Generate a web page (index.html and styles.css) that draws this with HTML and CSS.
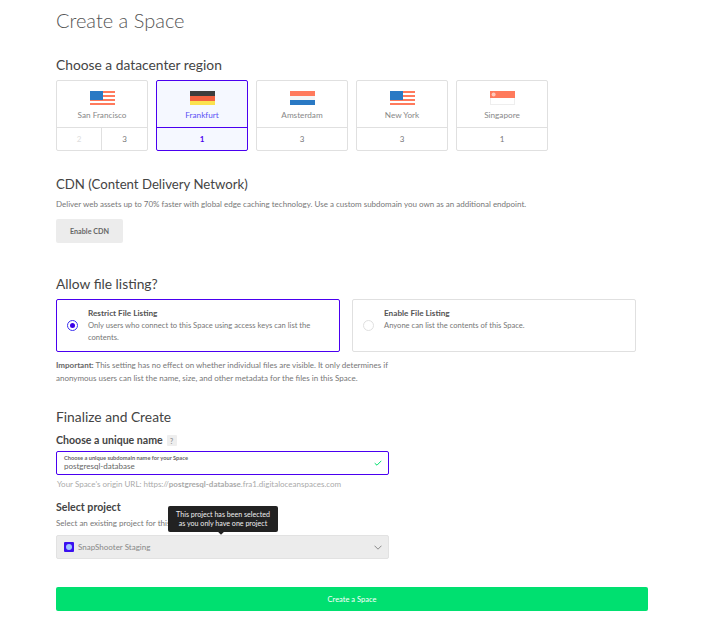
FILE: index.html
```html
<!DOCTYPE html>
<html lang="en">
<head>
<meta charset="utf-8">
<title>Create a Space</title>
<link rel="stylesheet" href="styles.css">
</head>
<body>
<main class="page">
  <h1 class="title">Create a Space</h1>

  <section class="region-section">
    <h2 class="heading">Choose a datacenter region</h2>
    <div class="regions">
      <div class="region">
        <div class="region-top">
          <svg class="flag" viewBox="0 0 25 14"><rect width="25" height="14" fill="#ff7a5c"/><rect y="2" width="25" height="2" fill="#fff"/><rect y="6" width="25" height="2" fill="#fff"/><rect y="10" width="25" height="2" fill="#fff"/><rect width="13" height="9" fill="#2a79c4"/></svg>
          <span class="region-name">San Francisco</span>
        </div>
        <div class="region-nums"><span class="num num-off">2</span><span class="num">3</span></div>
      </div>
      <div class="region region-on">
        <div class="region-top">
          <svg class="flag" viewBox="0 0 25 14"><rect width="25" height="5" fill="#3d3d3d"/><rect y="5" width="25" height="5" fill="#f2603f"/><rect y="10" width="25" height="4" fill="#fbe24f"/></svg>
          <span class="region-name">Frankfurt</span>
        </div>
        <div class="region-nums"><span class="num">1</span></div>
      </div>
      <div class="region">
        <div class="region-top">
          <svg class="flag" viewBox="0 0 25 14"><rect width="25" height="5" fill="#ff7a5c"/><rect y="5" width="25" height="4" fill="#f5f5f5"/><rect y="9" width="25" height="5" fill="#2a79c4"/></svg>
          <span class="region-name">Amsterdam</span>
        </div>
        <div class="region-nums"><span class="num">3</span></div>
      </div>
      <div class="region">
        <div class="region-top">
          <svg class="flag" viewBox="0 0 25 14"><rect width="25" height="14" fill="#ff7a5c"/><rect y="2" width="25" height="2" fill="#fff"/><rect y="6" width="25" height="2" fill="#fff"/><rect y="10" width="25" height="2" fill="#fff"/><rect width="13" height="9" fill="#2a79c4"/></svg>
          <span class="region-name">New York</span>
        </div>
        <div class="region-nums"><span class="num">3</span></div>
      </div>
      <div class="region">
        <div class="region-top">
          <svg class="flag" viewBox="0 0 25 14"><rect width="25" height="14" fill="#f0f0f0"/><rect x="0.5" y="0.5" width="24" height="13" fill="#fff" stroke="#eee"/><rect width="25" height="7" fill="#ff7a5c"/><circle cx="3.6" cy="3.4" r="2" fill="#ffc9bb"/></svg>
          <span class="region-name">Singapore</span>
        </div>
        <div class="region-nums"><span class="num">1</span></div>
      </div>
    </div>
  </section>

  <section class="cdn-section">
    <h2 class="heading heading-cdn">CDN (Content Delivery Network)</h2>
    <p class="copy">Deliver web assets up to 70% faster with global edge caching technology. Use a custom subdomain you own as an additional endpoint.</p>
    <button class="btn-grey" type="button">Enable CDN</button>
  </section>

  <section class="listing-section">
    <h2 class="heading">Allow file listing?</h2>
    <div class="options">
      <div class="option option-on">
        <span class="radio radio-on"></span>
        <div class="option-text">
          <strong class="option-title">Restrict File Listing</strong>
          <p class="copy">Only users who connect to this Space using access keys can list the contents.</p>
        </div>
      </div>
      <div class="option">
        <span class="radio"></span>
        <div class="option-text">
          <strong class="option-title">Enable File Listing</strong>
          <p class="copy">Anyone can list the contents of this Space.</p>
        </div>
      </div>
    </div>
    <p class="copy note"><b>Important:</b> This setting has no effect on whether individual files are visible. It only determines if anonymous users can list the name, size, and other metadata for the files in this Space.</p>
  </section>

  <section class="final-section">
    <h2 class="heading">Finalize and Create</h2>
    <div class="label-row"><h3 class="label">Choose a unique name</h3><span class="help">?</span></div>
    <div class="input">
      <span class="input-label">Choose a unique subdomain name for your Space</span>
      <span class="input-value">postgresql-database</span>
      <svg class="check" viewBox="0 0 8 6"><path d="M0.7 3.2 L3 5.2 L7.3 0.8" fill="none" stroke="#00e06e" stroke-width="1"/></svg>
    </div>
    <p class="origin">Your Space's origin URL: https://<b>postgresql-database</b>.fra1.digitaloceanspaces.com</p>

    <h3 class="label project-label">Select project</h3>
    <p class="copy">Select an existing project for this Space to belong to.</p>
    <div class="select-wrap">
      <div class="tooltip">This project has been selected<br>as you only have one project</div>
      <div class="select">
        <span class="project-icon"><i></i></span>
        <span class="select-value">SnapShooter Staging</span>
        <svg class="chevron" viewBox="0 0 8 5"><path d="M0.5 0.7 L4 4.2 L7.5 0.7" fill="none" stroke="#8a8a8a" stroke-width="1"/></svg>
      </div>
    </div>
    <button class="btn-create" type="button">Create a Space</button>
  </section>
</main>
</body>
</html>
```
FILE: styles.css
```css
* { box-sizing: border-box; }
html, body { margin: 0; padding: 0; background: #fff; }
body { font-family: "Lato", "Open Sans", sans-serif; color: #444; }
.page { width: 648px; height: 624px; padding: 9px 0 0 56px; overflow: hidden; }
h1, h2, h3, p { margin: 0; font-weight: normal; }
.title { font-size: 20px; line-height: 23px; font-weight: 300; color: #555; }
.heading { font-size: 13.8px; line-height: 17px; color: #444; }
.heading-cdn { font-size: 13.2px; }
.copy { font-size: 8px; line-height: 13px; color: #777; }

.region-section { margin-top: 24px; }
.regions { display: flex; gap: 8px; margin-top: 7px; }
.region { width: 92px; height: 71px; border: 1px solid #e0e0e0; border-radius: 2px; display: flex; flex-direction: column; }
.region-top { height: 47px; border-bottom: 1px solid #e0e0e0; display: flex; flex-direction: column; align-items: center; padding-top: 10px; }
.flag { width: 25px; height: 14px; display: block; }
.region-name { font-size: 8.2px; line-height: 10px; margin-top: 5px; color: #888; }
.region-nums { flex: 1; display: flex; }
.num { flex: 1; display: flex; align-items: center; justify-content: center; font-size: 8px; color: #777; }
.num + .num { border-left: 1px solid #e0e0e0; }
.num-off { color: #ddd; flex: 0 0 44px; }
.region-on { border-color: #4a00f0; background: #f5f8ff; }
.region-on .region-top { border-color: #4a00f0; }
.region-on .region-name { color: #5a50f5; }
.region-on .num { color: #4a00f0; font-weight: 700; }

.cdn-section { margin-top: 25px; }
.cdn-section .copy { margin-top: 5px; }
.btn-grey { display: block; margin-top: 8px; width: 67px; height: 24px; border: 0; border-radius: 2px; background: #ececec; color: #666; font: 700 7.2px "Lato", sans-serif; padding: 0; }

.listing-section { margin-top: 32px; }
.options { display: flex; gap: 12px; margin-top: 7px; width: 580px; }
.option { flex: 1; height: 53px; border: 1px solid #e0e0e0; border-radius: 2px; display: flex; align-items: center; padding: 0 10px; gap: 10px; }
.option-on { border-color: #4a00f0; }
.option-text { align-self: flex-start; padding-top: 7px; }
.option-text .copy { font-size: 7.6px; line-height: 12px; }
.option-title { display: block; font-size: 8.2px; line-height: 12px; color: #555; font-weight: 700; }
.radio { width: 11px; height: 11px; border: 1px solid #e0e0e0; border-radius: 50%; flex: none; display: flex; align-items: center; justify-content: center; }
.radio-on { border-color: #3a30f0; }
.radio-on::after { content: ""; width: 5px; height: 5px; border-radius: 50%; background: #3a00e8; }
.note { width: 345px; margin-top: 7px; }
.note b { color: #666; }

.final-section { margin-top: 23px; }
.label-row { display: flex; align-items: center; gap: 4px; margin-top: 9px; }
.label { font-size: 10.6px; line-height: 13px; font-weight: 700; color: #444; }
.help { width: 10px; height: 11px; background: #eee; border-radius: 1px; color: #999; font-size: 7px; font-weight: 700; display: flex; align-items: center; justify-content: center; }
.input { position: relative; width: 333px; height: 24px; margin-top: 4px; border: 1px solid #4a00f0; border-radius: 2px; padding: 2px 7px; display: flex; flex-direction: column; }
.input-label { font-size: 5.7px; line-height: 7px; font-weight: 700; color: #666; }
.input-value { font-size: 8px; line-height: 11px; color: #666; }
.check { position: absolute; right: 6px; top: 8px; width: 8px; height: 6px; }
.origin { font-size: 8px; line-height: 12px; color: #aaa; margin-top: 3px; padding-left: 1px; }
.origin b { font-weight: 700; }
.project-label { margin-top: 11px; }
.project-label + .copy { margin-top: 3px; }
.select-wrap { position: relative; margin-top: 5px; width: 333px; }
.select { height: 24px; background: #ececec; border: 1px solid #e2e2e2; border-radius: 2px; display: flex; align-items: center; padding: 0 5px 0 7px; gap: 4px; }
.project-icon { width: 10px; height: 10px; background: #3a10f0; border-radius: 1px; display: flex; align-items: center; justify-content: center; }
.project-icon i { width: 6px; height: 6px; background: #9fc5ff; border-radius: 50%; display: block; }
.select-value { font-size: 8px; color: #888; flex: 1; }
.chevron { width: 8px; height: 5px; margin-right: 1px; }
.tooltip { position: absolute; left: 112px; top: -29px; width: 110px; height: 26px; background: #222; border-radius: 2px; color: #eee; font-size: 7.1px; line-height: 9px; text-align: center; padding-top: 4px; }
.tooltip::after { content: ""; position: absolute; left: 51px; bottom: -2px; width: 4px; height: 4px; background: #222; transform: rotate(45deg); }
.btn-create { display: block; margin-top: 28px; width: 592px; height: 24px; border: 0; border-radius: 2px; background: #00e070; color: #fff; font: 7.5px "Lato", sans-serif; padding: 0; }
```
